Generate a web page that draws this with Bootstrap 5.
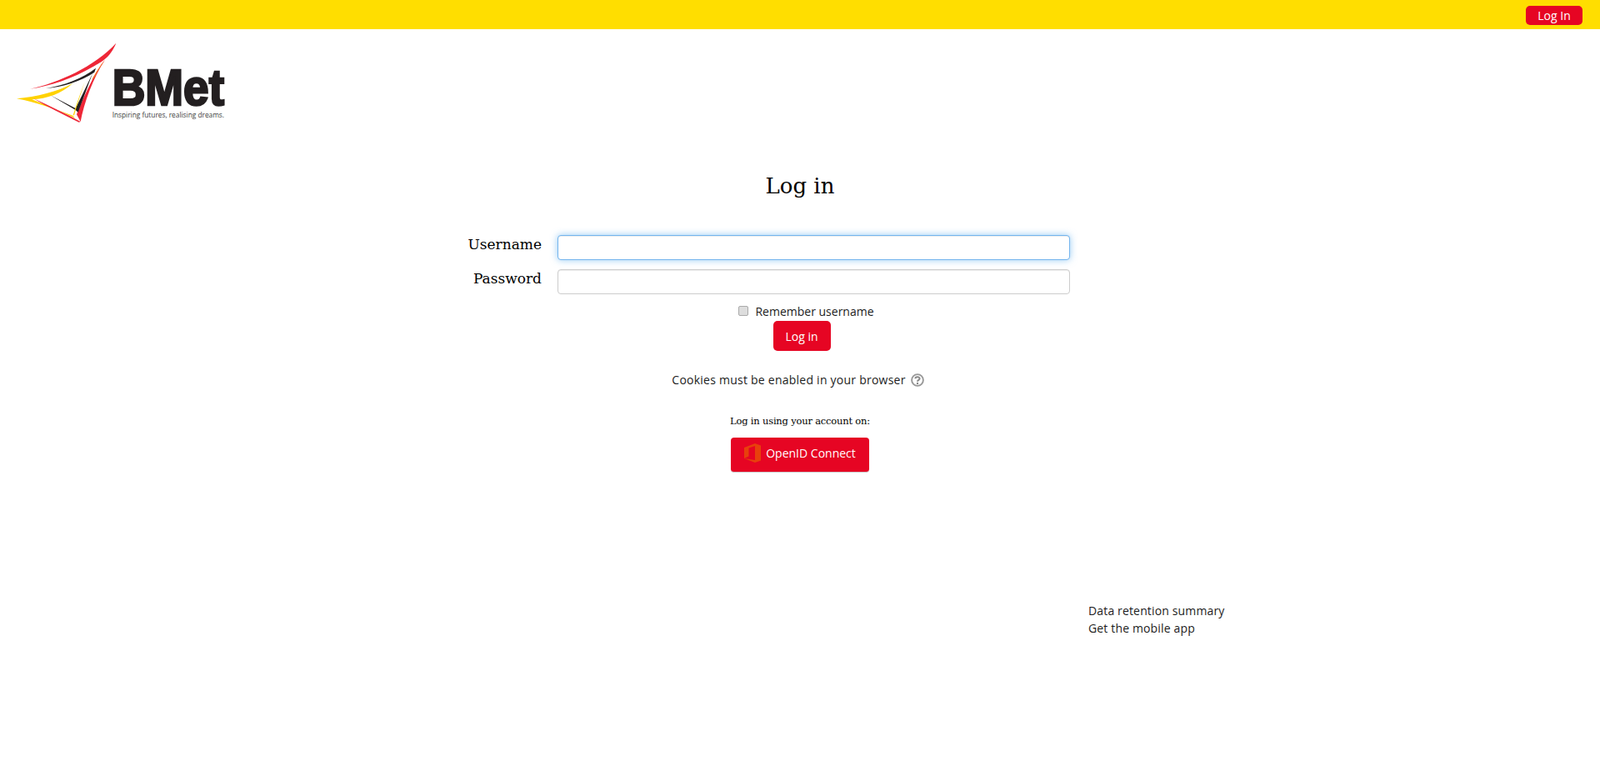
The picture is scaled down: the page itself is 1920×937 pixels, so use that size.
<!DOCTYPE html>
<html lang="en">
<head>
  <meta charset="UTF-8">
  <meta name="viewport" content="width=device-width, initial-scale=1.0">
  <title>BMet: Log in to the site</title>
  <link href="https://cdn.jsdelivr.net/npm/bootstrap@5.3.0/dist/css/bootstrap.min.css" rel="stylesheet">
  <style>
    body { font-family: "Open Sans", sans-serif; font-size: 14px; color: #1c1c1c; background: #fff; }
    .top-strip { height: 35px; background: #ffde00; padding: 7px 21px 0 0; }
    .btn-bmet { background: #e60523; border: 0; color: #fff; font-size: 14px; }
    .btn-bmet:hover { background: #c90420; color: #fff; }
    .btn-top { width: 68px; height: 23px; padding: 0; line-height: 23px; border-radius: 5px; }
    .logo-wrap { height: 125px; }
    .logo-wrap svg { display: block; margin-top: -5px; }
    .login-title { font-family: "DejaVu Serif", serif; font-size: 26px; font-weight: 400; color: #000; line-height: 36px; margin: 0; padding-top: 50px; height: 103px; text-align: center; }
    .login-form { width: 1000px; margin: 0 auto; padding-top: 24px; }
    .field-row { margin-left: 0; height: 41px; }
    .field-label { width: 190px; text-align: right; font-family: "DejaVu Serif", serif; font-size: 17px; color: #000; line-height: 22px; margin: 0 19px 0 0; }
    .field-box { width: 615px; height: 30px; padding: 4px 6px; border: 1px solid #ccc; border-radius: 4px; box-shadow: inset 0 1px 1px rgba(0,0,0,.075); }
    .field-focus, .field-focus:focus { border-color: #74b5ee; box-shadow: inset 0 1px 1px rgba(0,0,0,.075), 0 0 8px rgba(82,168,236,.6); }
    .remember-line { padding-left: 15px; margin-top: -2px; height: 23px; line-height: 21px; }
    .remember-box { appearance: none; width: 12px; height: 12px; background: #ddd; border: 1px solid #aaa; border-radius: 2px; margin: 0 8px 0 0; position: relative; top: -1px; }
    .btn-login { width: 69px; height: 36px; padding: 0; margin-left: 4px; border-radius: 5px; }
    .cookies-line { margin-top: 22px; height: 25px; line-height: 25px; letter-spacing: .24px; gap: 6px; padding-right: 5px; }
    .using-line { font-family: "DejaVu Serif", serif; font-size: 11.5px; color: #000; margin-top: 27px; line-height: 20px; letter-spacing: -.2px; }
    .btn-oidc { width: 166px; height: 42px; margin-top: 10px; padding: 0 0 4px; gap: 6px; border-radius: 4px; border-bottom: 1px solid #ccc; }
    .page-links { padding: 155px 0 0 1306px; line-height: 21px; letter-spacing: .15px; }
  </style>
</head>
<body>

<div class="top-strip d-flex justify-content-end align-items-start">
  <a href="#" class="btn btn-bmet btn-top">Log In</a>
</div>

<!-- logo, coordinates are the 3x crop -->
<div class="logo-wrap">
  <svg width="300" height="130" viewBox="0 0 900 390">
    <path fill="#ee2737" d="M108 230C210 208 340 150 418 65C396 118 366 132 335 150C262 193 180 220 108 230Z"/>
    <path fill="#ee2737" d="M378 125C340 170 300 262 276 322L290 348C302 282 335 190 378 125Z"/>
    <path fill="#f47b20" d="M378 125C362 143 345 170 330 198L339 190C350 168 364 146 378 125Z"/>
    <path fill="#231f20" d="M165 228C230 218 298 192 345 155L340 170C290 203 225 224 165 228Z"/>
    <path fill="#231f20" d="M334 172C316 220 298 270 281 314L272 306L180 252L272 300C295 255 315 212 334 172Z"/>
    <path fill="#ffd200" d="M60 265C130 258 210 240 262 210C222 246 170 266 115 268C160 285 215 310 270 335L262 326C205 305 130 278 60 265Z"/>
    <path fill="#ffd200" d="M305 205C290 245 275 285 263 325L267 325C278 285 292 245 305 205Z"/>
    <path fill="#ee2737" d="M120 264C175 290 235 318 290 348L284 350C228 322 172 296 120 264Z"/>
    <text x="404" y="288" font-family="Liberation Sans, sans-serif" font-weight="700" font-size="183" fill="#231f20" stroke="#231f20" stroke-width="8" textLength="403" lengthAdjust="spacingAndGlyphs">BMet</text>
    <text x="404" y="333" font-family="Open Sans, sans-serif" font-size="28" fill="#3c3c3c" textLength="403" lengthAdjust="spacingAndGlyphs">Inspiring futures, realising dreams.</text>
  </svg>
</div>

<main>
  <h1 class="login-title">Log in</h1>

  <form class="login-form" onsubmit="return false">
    <div class="field-row d-flex align-items-start">
      <label class="field-label" for="username">Username</label>
      <input type="text" id="username" class="form-control field-box field-focus">
    </div>
    <div class="field-row d-flex align-items-start">
      <label class="field-label" for="password">Password</label>
      <input type="password" id="password" class="form-control field-box">
    </div>
  </form>

  <div class="text-center">
    <div class="remember-line d-flex justify-content-center align-items-center">
      <input type="checkbox" id="rememberusername" class="remember-box">
      <label for="rememberusername">Remember username</label>
    </div>
    <button class="btn btn-bmet btn-login" type="button">Log in</button>

    <div class="cookies-line d-flex justify-content-center align-items-center">
      <span>Cookies must be enabled in your browser</span>
      <svg width="16" height="16" viewBox="0 0 16 16">
        <circle cx="8" cy="8" r="6.9" fill="#fff" stroke="#999" stroke-width="1.9"/>
        <path fill="none" stroke="#888" stroke-width="2" d="M5.4 6.3C5.4 3.6 10.6 3.6 10.6 6.2C10.6 8 8 7.7 8 9.8"/>
        <circle cx="8" cy="12" r="1.2" fill="#888"/>
      </svg>
    </div>

    <div class="using-line">Log in using your account on:</div>
    <a href="#" class="btn btn-bmet btn-oidc d-inline-flex justify-content-center align-items-center">
      <svg width="20" height="23" viewBox="0 0 20 23">
        <path fill="#e8400c" fill-rule="evenodd" d="M0 5L13 0L20 2.5V20.5L13 23L0 18ZM13 3L5.5 5.5V15.5L0 18L13 20Z"/>
      </svg>
      <span>OpenID Connect</span>
    </a>
  </div>

  <div class="page-links">
    <div><a href="#" class="text-decoration-none text-reset">Data retention summary</a></div>
    <div><a href="#" class="text-decoration-none text-reset">Get the mobile app</a></div>
  </div>
</main>

<script src="https://cdn.jsdelivr.net/npm/bootstrap@5.3.0/dist/js/bootstrap.bundle.min.js"></script>
</body>
</html>
